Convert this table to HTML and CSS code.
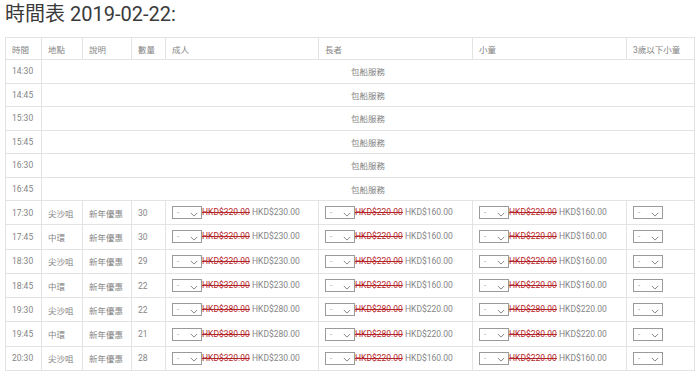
FILE: index.html
```html
<!DOCTYPE html>
<html lang="zh-Hant">
<head>
<meta charset="utf-8">
<title>時間表</title>
<link rel="stylesheet" href="styles.css">
</head>
<body>
<div class="page">
  <h2 class="title">時間表 2019-02-22:</h2>
  <table class="schedule">
    <colgroup>
      <col class="c-time"><col class="c-loc"><col class="c-desc"><col class="c-qty">
      <col class="c-adult"><col class="c-senior"><col class="c-child"><col class="c-infant">
    </colgroup>
    <thead>
      <tr><th>時間</th><th>地點</th><th>說明</th><th>數量</th><th>成人</th><th>長者</th><th>小童</th><th>3歲以下小童</th></tr>
    </thead>
    <tbody>
      <tr class="blank"><td>14:30</td><td colspan="7" class="charter">包船服務</td></tr>
      <tr class="blank"><td>14:45</td><td colspan="7" class="charter">包船服務</td></tr>
      <tr class="blank"><td>15:30</td><td colspan="7" class="charter">包船服務</td></tr>
      <tr class="blank"><td>15:45</td><td colspan="7" class="charter">包船服務</td></tr>
      <tr class="blank"><td>16:30</td><td colspan="7" class="charter">包船服務</td></tr>
      <tr class="blank"><td>16:45</td><td colspan="7" class="charter">包船服務</td></tr>

      <tr class="sale"><td>17:30</td><td>尖沙咀</td><td>新年優惠</td><td>30</td>
        <td><span class="sel">-<svg viewBox="0 0 10 6"><path d="M1 1l4 4 4-4"/></svg></span><s>HKD$320.00</s> HKD$230.00</td>
        <td><span class="sel">-<svg viewBox="0 0 10 6"><path d="M1 1l4 4 4-4"/></svg></span><s>HKD$220.00</s> HKD$160.00</td>
        <td><span class="sel">-<svg viewBox="0 0 10 6"><path d="M1 1l4 4 4-4"/></svg></span><s>HKD$220.00</s> HKD$160.00</td>
        <td><span class="sel">-<svg viewBox="0 0 10 6"><path d="M1 1l4 4 4-4"/></svg></span></td></tr>
      <tr class="sale"><td>17:45</td><td>中環</td><td>新年優惠</td><td>30</td>
        <td><span class="sel">-<svg viewBox="0 0 10 6"><path d="M1 1l4 4 4-4"/></svg></span><s>HKD$320.00</s> HKD$230.00</td>
        <td><span class="sel">-<svg viewBox="0 0 10 6"><path d="M1 1l4 4 4-4"/></svg></span><s>HKD$220.00</s> HKD$160.00</td>
        <td><span class="sel">-<svg viewBox="0 0 10 6"><path d="M1 1l4 4 4-4"/></svg></span><s>HKD$220.00</s> HKD$160.00</td>
        <td><span class="sel">-<svg viewBox="0 0 10 6"><path d="M1 1l4 4 4-4"/></svg></span></td></tr>
      <tr class="sale"><td>18:30</td><td>尖沙咀</td><td>新年優惠</td><td>29</td>
        <td><span class="sel">-<svg viewBox="0 0 10 6"><path d="M1 1l4 4 4-4"/></svg></span><s>HKD$320.00</s> HKD$230.00</td>
        <td><span class="sel">-<svg viewBox="0 0 10 6"><path d="M1 1l4 4 4-4"/></svg></span><s>HKD$220.00</s> HKD$160.00</td>
        <td><span class="sel">-<svg viewBox="0 0 10 6"><path d="M1 1l4 4 4-4"/></svg></span><s>HKD$220.00</s> HKD$160.00</td>
        <td><span class="sel">-<svg viewBox="0 0 10 6"><path d="M1 1l4 4 4-4"/></svg></span></td></tr>
      <tr class="sale"><td>18:45</td><td>中環</td><td>新年優惠</td><td>22</td>
        <td><span class="sel">-<svg viewBox="0 0 10 6"><path d="M1 1l4 4 4-4"/></svg></span><s>HKD$320.00</s> HKD$230.00</td>
        <td><span class="sel">-<svg viewBox="0 0 10 6"><path d="M1 1l4 4 4-4"/></svg></span><s>HKD$220.00</s> HKD$160.00</td>
        <td><span class="sel">-<svg viewBox="0 0 10 6"><path d="M1 1l4 4 4-4"/></svg></span><s>HKD$220.00</s> HKD$160.00</td>
        <td><span class="sel">-<svg viewBox="0 0 10 6"><path d="M1 1l4 4 4-4"/></svg></span></td></tr>
      <tr class="sale"><td>19:30</td><td>尖沙咀</td><td>新年優惠</td><td>22</td>
        <td><span class="sel">-<svg viewBox="0 0 10 6"><path d="M1 1l4 4 4-4"/></svg></span><s>HKD$380.00</s> HKD$280.00</td>
        <td><span class="sel">-<svg viewBox="0 0 10 6"><path d="M1 1l4 4 4-4"/></svg></span><s>HKD$280.00</s> HKD$220.00</td>
        <td><span class="sel">-<svg viewBox="0 0 10 6"><path d="M1 1l4 4 4-4"/></svg></span><s>HKD$280.00</s> HKD$220.00</td>
        <td><span class="sel">-<svg viewBox="0 0 10 6"><path d="M1 1l4 4 4-4"/></svg></span></td></tr>
      <tr class="sale"><td>19:45</td><td>中環</td><td>新年優惠</td><td>21</td>
        <td><span class="sel">-<svg viewBox="0 0 10 6"><path d="M1 1l4 4 4-4"/></svg></span><s>HKD$380.00</s> HKD$280.00</td>
        <td><span class="sel">-<svg viewBox="0 0 10 6"><path d="M1 1l4 4 4-4"/></svg></span><s>HKD$280.00</s> HKD$220.00</td>
        <td><span class="sel">-<svg viewBox="0 0 10 6"><path d="M1 1l4 4 4-4"/></svg></span><s>HKD$280.00</s> HKD$220.00</td>
        <td><span class="sel">-<svg viewBox="0 0 10 6"><path d="M1 1l4 4 4-4"/></svg></span></td></tr>
      <tr class="sale"><td>20:30</td><td>尖沙咀</td><td>新年優惠</td><td>28</td>
        <td><span class="sel">-<svg viewBox="0 0 10 6"><path d="M1 1l4 4 4-4"/></svg></span><s>HKD$320.00</s> HKD$230.00</td>
        <td><span class="sel">-<svg viewBox="0 0 10 6"><path d="M1 1l4 4 4-4"/></svg></span><s>HKD$220.00</s> HKD$160.00</td>
        <td><span class="sel">-<svg viewBox="0 0 10 6"><path d="M1 1l4 4 4-4"/></svg></span><s>HKD$220.00</s> HKD$160.00</td>
        <td><span class="sel">-<svg viewBox="0 0 10 6"><path d="M1 1l4 4 4-4"/></svg></span></td></tr>
    </tbody>
  </table>
</div>
</body>
</html>
```
FILE: styles.css
```css
html, body {
  margin: 0;
  padding: 0;
  background: #fff;
}
body {
  font-family: Roboto, "Noto Sans CJK TC", sans-serif;
  color: #333;
}
.page {
  padding: 3px 6px 0 5px;
}
.title {
  margin: 0 0 11px 0;
  font-size: 20px;
  font-weight: 400;
  line-height: 23px;
  color: #3a3a3a;
}
.schedule {
  width: 689px;
  table-layout: fixed;
  border-collapse: collapse;
  font-size: 8.5px;
  color: #858585;
}
.c-time { width: 36px; }
.c-loc { width: 41px; }
.c-desc { width: 49px; }
.c-qty { width: 34px; }
.c-adult { width: 153px; }
.c-senior { width: 154px; }
.c-child { width: 154px; }
.c-infant { width: 68px; }
.schedule th,
.schedule td {
  border: 1px solid #e3e3e3;
  padding: 0 0 0 6px;
  text-align: left;
  font-weight: 400;
  white-space: nowrap;
  overflow: hidden;
  vertical-align: middle;
}
.schedule thead tr { height: 22px; }
.schedule tr.blank { height: 23.5px; }
.schedule tr.sale { height: 24.3px; }
.schedule td.charter {
  text-align: center;
  padding: 0;
}
.sel {
  display: inline-flex;
  align-items: center;
  justify-content: space-between;
  box-sizing: border-box;
  width: 30px;
  height: 13px;
  padding: 0 3px 0 4px;
  border: 1px solid #9a9a9a;
  background: #fff;
  color: #999;
  font-size: 8px;
  vertical-align: middle;
  margin-right: 0;
}
.sel svg {
  width: 8px;
  height: 5px;
  margin-top: 3px;
  fill: none;
  stroke: #777;
  stroke-width: 1.1;
}
.schedule s {
  color: #b5262a;
  text-decoration: line-through;
  text-decoration-color: #b5262a;
}
```
